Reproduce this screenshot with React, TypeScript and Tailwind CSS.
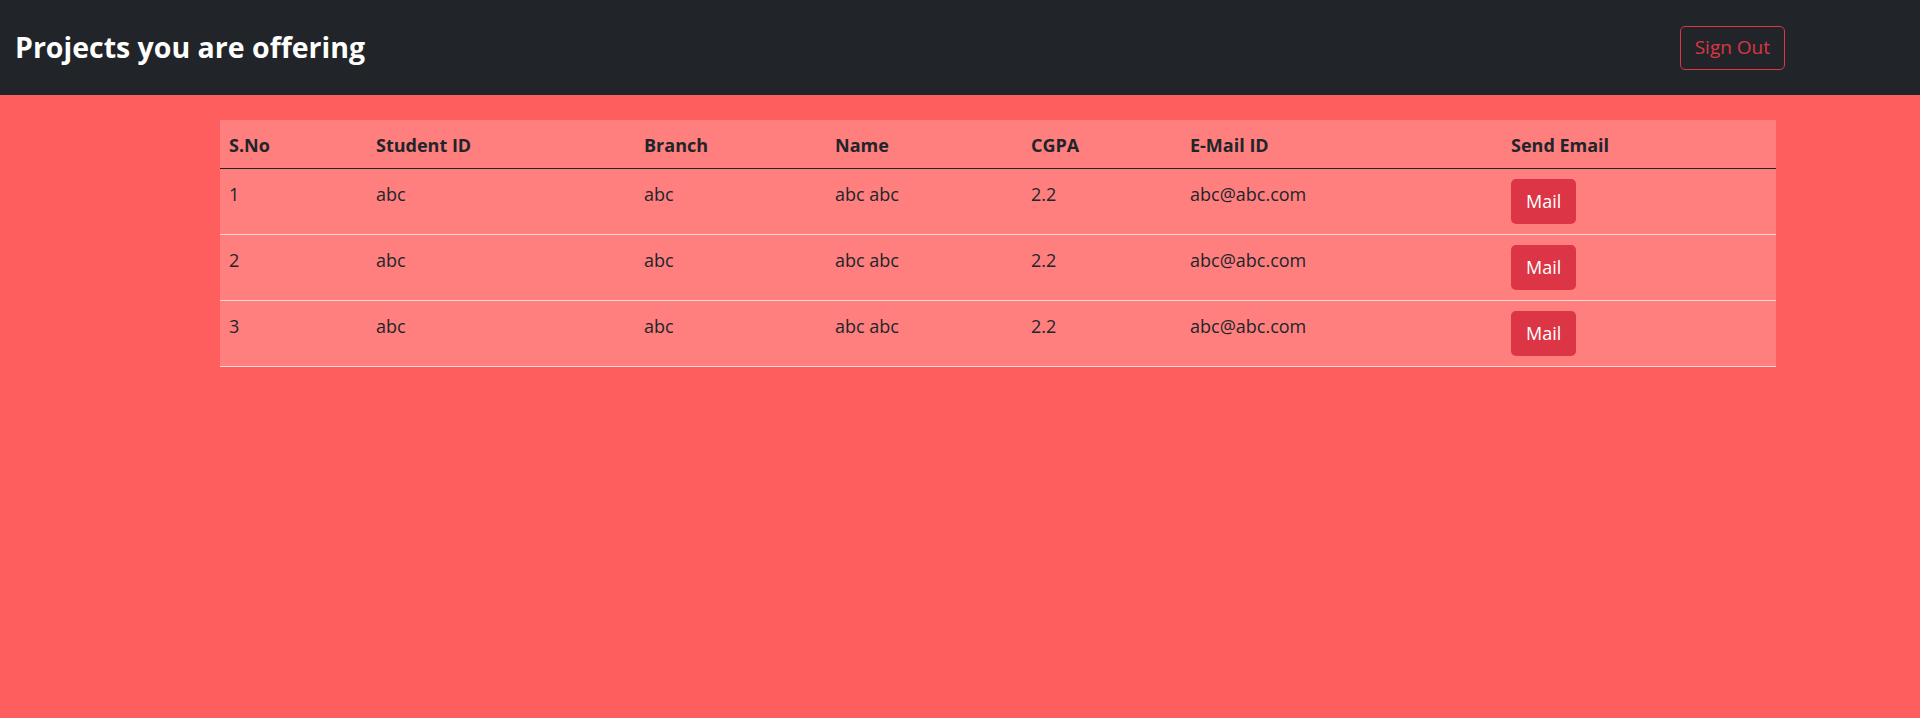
import React from 'react';

const rows = [
  { sno: 1, id: 'abc', branch: 'abc', name: 'abc abc', cgpa: '2.2', email: 'abc@abc.com' },
  { sno: 2, id: 'abc', branch: 'abc', name: 'abc abc', cgpa: '2.2', email: 'abc@abc.com' },
  { sno: 3, id: 'abc', branch: 'abc', name: 'abc abc', cgpa: '2.2', email: 'abc@abc.com' },
];

const headers = ['S.No', 'Student ID', 'Branch', 'Name', 'CGPA', 'E-Mail ID', 'Send Email'];

export default function App() {
  return (
    <div className="min-h-[718px] bg-[#ff5e5e] font-['Open_Sans',sans-serif] text-[#212529]">
      {/* Navbar */}
      <nav className="flex h-[95px] items-center justify-between bg-[#212529] pl-[15px] pr-[135px]">
        <h3 className="text-[28.5px] font-bold leading-none text-white">Projects you are offering</h3>
        <button className="h-[44px] rounded-[5px] border border-[#dc3545] px-[14px] text-[19px] text-[#dc3545]">
          Sign Out
        </button>
      </nav>

      {/* Table */}
      <div className="ml-[220px] mt-[25px] w-[1556px]">
        <table className="w-full table-fixed border-collapse bg-[#ff7f7f] text-[18px]">
          <colgroup>
            <col className="w-[147px]" />
            <col className="w-[268px]" />
            <col className="w-[191px]" />
            <col className="w-[196px]" />
            <col className="w-[159px]" />
            <col className="w-[321px]" />
            <col />
          </colgroup>
          <thead>
            <tr className="h-[48px] border-b border-[#212529]">
              {headers.map((h) => (
                <th key={h} className="px-[9px] pt-[3px] text-left align-middle font-bold">
                  {h}
                </th>
              ))}
            </tr>
          </thead>
          <tbody>
            {rows.map((r) => (
              <tr key={r.sno} className="h-[66px] border-b border-[#ffd6d6]">
                <td className="px-[9px] pt-[12px] align-top">{r.sno}</td>
                <td className="px-[9px] pt-[12px] align-top">{r.id}</td>
                <td className="px-[9px] pt-[12px] align-top">{r.branch}</td>
                <td className="px-[9px] pt-[12px] align-top">{r.name}</td>
                <td className="px-[9px] pt-[12px] align-top">{r.cgpa}</td>
                <td className="px-[9px] pt-[12px] align-top">{r.email}</td>
                <td className="px-[9px] pt-[10px] align-top">
                  <button className="h-[45px] rounded-[5px] bg-[#dc3545] px-[15px] text-[18px] text-white">
                    Mail
                  </button>
                </td>
              </tr>
            ))}
          </tbody>
        </table>
      </div>
    </div>
  );
}
